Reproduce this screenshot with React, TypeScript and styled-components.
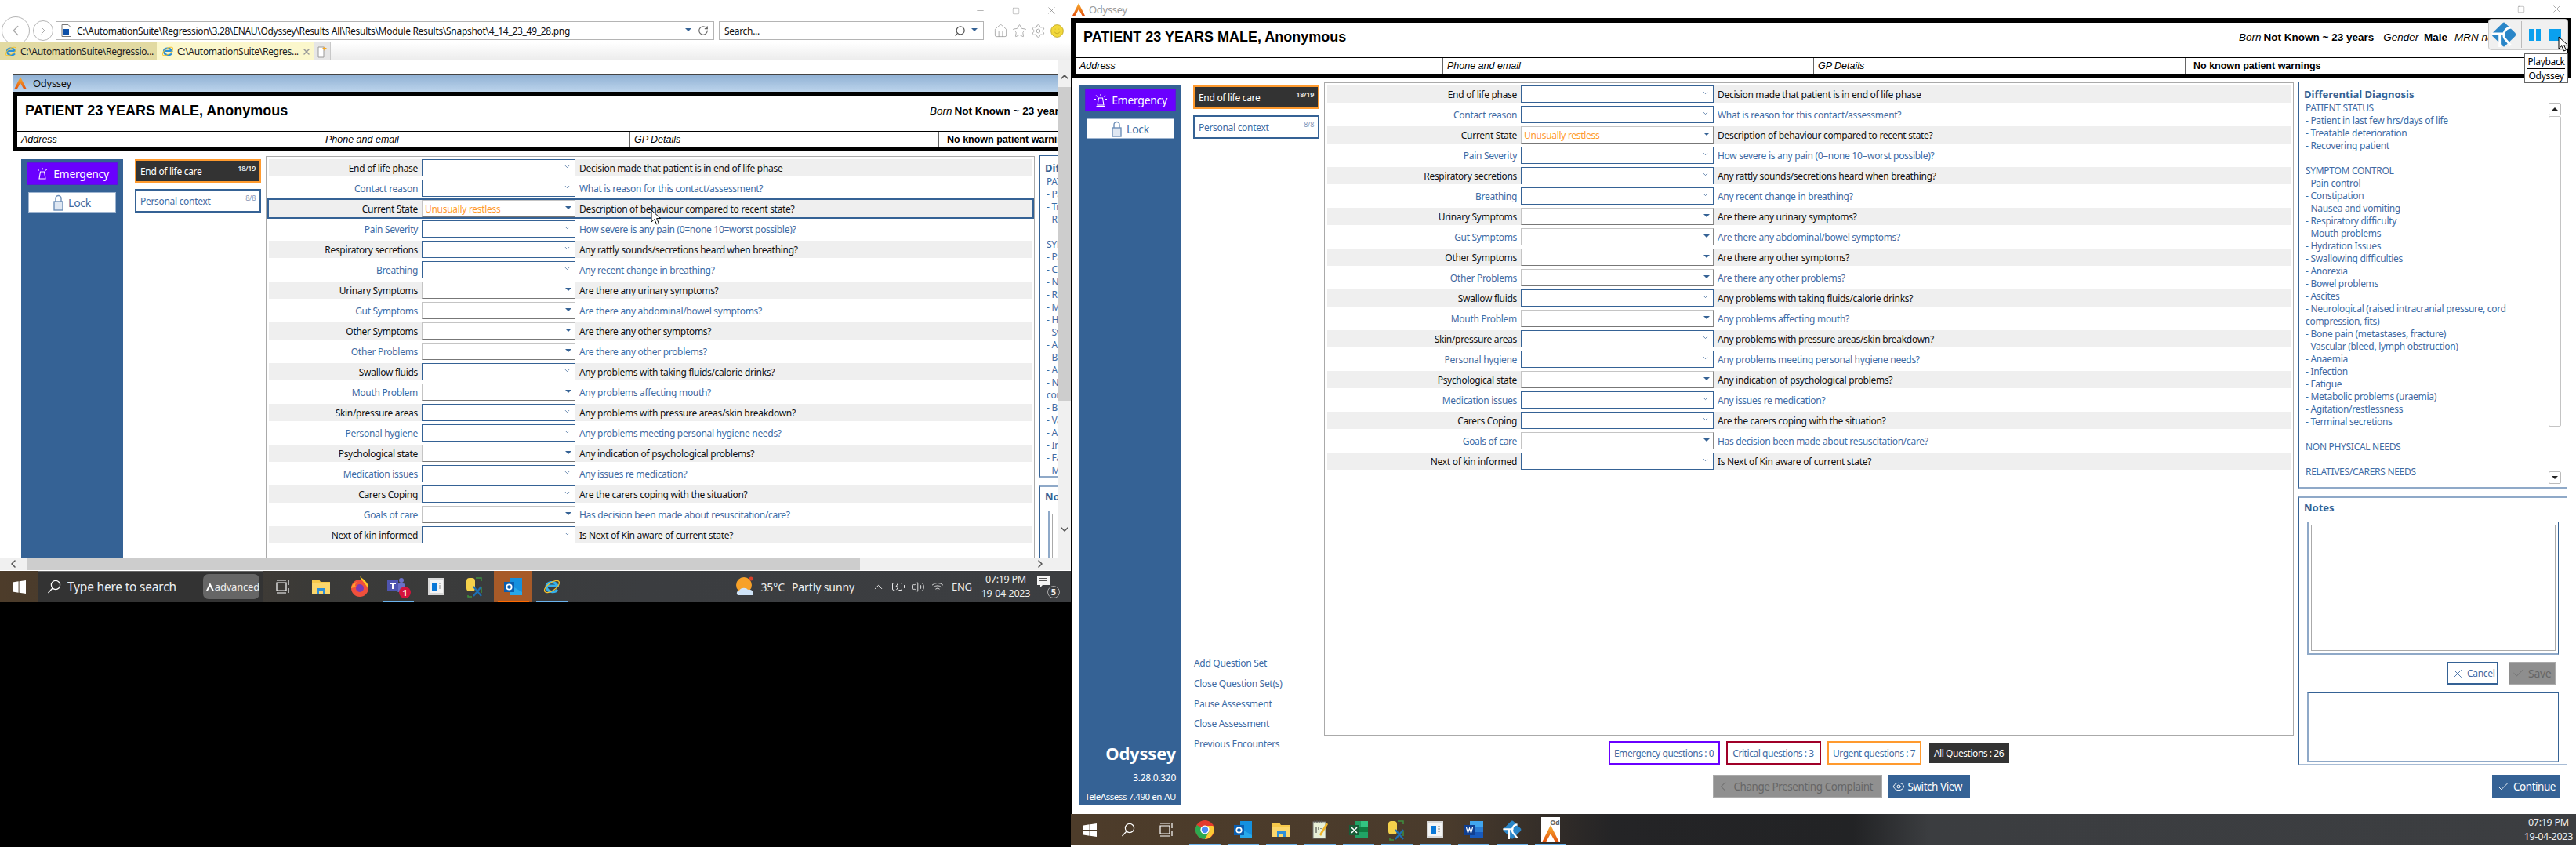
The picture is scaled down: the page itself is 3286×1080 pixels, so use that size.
import React from "react";
import styled, { createGlobalStyle } from "styled-components";
import { X, Check, ChevronLeft, ChevronRight, ChevronUp, ChevronDown, Eye, Home, Star, Settings, Search, RotateCw, Smile, Minus, Square, Volume2, Wifi, BatteryCharging } from "lucide-react";

const BLUE = "#356295";
const TXT = "#3f6ba3";
const UI = `"Noto Sans", "Open Sans", sans-serif`;
const ARIAL = `"Liberation Sans", Arial, sans-serif`;

const Global = createGlobalStyle`
  html, body { margin: 0; padding: 0; background: #000; }
  * { box-sizing: border-box; }
`;

const Page = styled.div`
  display: flex; align-items: flex-start; width: 3286px; height: 1080px; background: #000; overflow: hidden;
  font-family: ${UI}; font-size: 12px; letter-spacing: -0.3px; color: #000;
`;
const LeftWindow = styled.div`
  position: relative; width: 1366px; height: 768px; background: #fff; display: flex; flex-direction: column; flex: none;
`;
const RightWindow = styled.div`
  position: relative; width: 1920px; height: 1080px; background: #fff; display: flex; flex-direction: column; flex: none;
`;
const Controls = styled.div<{ $h: number }>`
  height: ${p => p.$h}px; display: flex; align-items: center; justify-content: flex-end; padding-right: 2px; flex: 1;
`;
const CtlSlot = styled.div`
  width: 45.5px; display: flex; align-items: center; justify-content: center; color: #777;
`;
const TopRow = styled.div`display: flex; flex: none; align-items: center;`;
const NavRow = styled.div`
  height: 24px; flex: none; display: flex; align-items: center; margin-bottom: 3px;
`;
const RoundBtn = styled.div<{ $s: number; $ml: number }>`
  width: ${p => p.$s}px; height: ${p => p.$s}px; margin-left: ${p => p.$ml}px; border-radius: 50%; border: 1px solid #b5b5b5;
  display: flex; align-items: center; justify-content: center; color: #aaa; flex: none; background: #fff;
`;
const UrlBox = styled.div<{ $w: number; $ml: number }>`
  width: ${p => p.$w}px; margin-left: ${p => p.$ml}px; height: 24px; border: 1px solid #b4b4b4; display: flex; align-items: center;
  padding: 0 6px 0 6px; gap: 7px; white-space: nowrap; font-size: 12px; flex: none; color: #111; overflow: hidden;
`;
const UrlText = styled.span`flex: 1; overflow: hidden;`;
const Tools = styled.div`display: flex; gap: 5px; margin-left: 12px; color: #999;`;
const TabRow = styled.div`
  height: 23px; flex: none; display: flex; background: linear-gradient(#fff, #ececec);
`;
const BrowserTab = styled.div<{ $active?: boolean }>`
  width: 200px; display: flex; align-items: center; gap: 4px; padding-left: 6px; white-space: nowrap; font-size: 12px; color: #222;
  background: ${p => (p.$active ? "#fbf7cc" : "#e2daa2")}; overflow: hidden;
`;
const NewTab = styled.div`
  width: 22px; background: #e6e6e6; border: 1px solid #c8c8c8; border-width: 0 1px; display: flex; align-items: center; justify-content: center;
`;
const Middle = styled.div`height: 634px; flex: none; display: flex;`;
const ContentPane = styled.div`flex: 1; overflow: hidden; padding: 17px 0 0 16px; min-width: 0;`;
const VScroll = styled.div`
  width: 16px; flex: none; background: #f0f0f0; display: flex; flex-direction: column; align-items: center; color: #555;
`;
const VEnd = styled.div<{ $h: number }>`height: ${p => p.$h}px; flex: none; display: flex; align-items: flex-end; justify-content: center;`;
const VThumb = styled.div`height: 400px; width: 16px; background: #cdcdcd; flex: none;`;
const HScroll = styled.div`height: 16px; flex: none; background: #f0f0f0; display: flex; align-items: center; color: #555;`;
const HBtn = styled.div`width: 34px; display: flex; justify-content: center; flex: none;`;
const HThumb = styled.div`width: 1063px; height: 16px; background: #cdcdcd; flex: none;`;
const HRight = styled.div`margin-left: 222px; flex: none; display: flex;`;
const Hairline = styled.div`height: 1px; flex: none; background: #fff;`;

const TitleBar = styled.div`
  height: 23px; display: flex; align-items: center; gap: 8px; padding-left: 2px;
  background: linear-gradient(#8fb0d3, #bcd4ec); font-size: 13px; color: #111; border-top: 1px solid #444;
`;
const PlainTitle = styled.div`
  display: flex; align-items: center; gap: 5px; padding-left: 2px; height: 23px; width: 300px; flex: none; color: #9a9a9a; font-size: 13px;
`;
const HeaderFrame = styled.div<{ $w: number }>`
  width: ${p => p.$w}px; border: solid #000; border-width: 6px 6px 5px; background: #fff; font-family: ${ARIAL}; letter-spacing: 0;
`;
const HeaderTop = styled.div`height: 45px; border-bottom: 1px solid #000; display: flex; padding: 6px 10px 0; white-space: nowrap;`;
const PatientTitle = styled.div`font-size: 18px; font-weight: 700; line-height: 24px; width: 335px; flex: none;`;
const Born = styled.div<{ $gap: number }>`margin-left: ${p => p.$gap}px; font-size: 13.5px; line-height: 26px; font-weight: 700; display: flex; gap: 3px;`;
const Em = styled.span<{ $ml?: number }>`font-style: italic; font-weight: 400; margin-left: ${p => p.$ml ?? 0}px;`;
const HeaderCols = styled.div<{ $cols: string }>`display: grid; grid-template-columns: ${p => p.$cols}; height: 20px;`;
const HeaderCell = styled.div<{ $strong?: boolean }>`
  font-size: 12.5px; line-height: 21px; padding-left: ${p => (p.$strong ? 10 : 5)}px; white-space: nowrap; overflow: hidden;
  font-style: ${p => (p.$strong ? "normal" : "italic")}; font-weight: ${p => (p.$strong ? 700 : 400)}; border-left: 1px solid #666;
  &:first-child { border-left: 0; }
`;
const Body = styled.div`
  height: 939px; border-left: 1px solid #000; padding: 5px 0 0 10px; display: flex; align-items: flex-start; background: #fff; width: 1900px;
`;
const Sidebar = styled.aside`
  width: 130px; height: 918px; margin-top: 5px; background: ${BLUE}; padding: 4px 7px 3px 7px; display: flex; flex-direction: column; flex: none; color: #fff;
`;
const EmergencyBtn = styled.div`
  height: 29px; background: #6a00ff; border: 1px solid #5a16d8; color: #fff; display: flex; align-items: center; justify-content: center; gap: 5px; font-size: 14px;
`;
const LockBtn = styled.div`
  height: 26px; width: 112px; margin: 9px auto 0; background: #fff; border: 1px solid #9db4d0; color: ${TXT}; display: flex; align-items: center; justify-content: center; gap: 6px; font-size: 14px;
`;
const SideFoot = styled.div`margin-top: auto; display: flex; flex-direction: column; align-items: flex-end; white-space: nowrap;`;
const Brand = styled.div`font-size: 22px; font-weight: 700; line-height: 30px; letter-spacing: -0.2px;`;
const Version = styled.div`font-size: 12px; line-height: 16px; margin-top: 9px;`;
const Tele = styled.div`font-size: 11.5px; letter-spacing: -0.45px; line-height: 16px; margin-top: 8px;`;
const Nav = styled.nav`width: 161px; margin: 5px 0 0 15px; height: 918px; display: flex; flex-direction: column; flex: none;`;
const SetTab = styled.div<{ $active?: boolean }>`
  height: 30px; margin-bottom: 8px; border: 2px solid ${p => (p.$active ? "#ff9a2e" : BLUE)}; background: ${p => (p.$active ? "#333" : "#fff")};
  color: ${p => (p.$active ? "#fff" : TXT)}; padding: 0 5px; display: flex; justify-content: space-between; font-size: 12px; line-height: 27px;
`;
const SetCount = styled.span<{ $active?: boolean }>`font-size: 9px; line-height: 20px; font-weight: ${p => (p.$active ? 600 : 400)}; color: ${p => (p.$active ? "#eee" : "#7f95b5")};`;
const Links = styled.div`margin-top: auto; display: flex; flex-direction: column; margin-bottom: 65px;`;
const NavLink = styled.a`color: ${TXT}; height: 25.8px; line-height: 25.8px; padding-left: 1px; white-space: nowrap;`;
const Center = styled.div<{ $w: number }>`width: ${p => p.$w}px; margin: 1px 0 0 6px; display: flex; flex-direction: column; align-items: stretch; flex: none;`;
const FormPanel = styled.div`height: 833px; border: 1px solid #aaa; padding: 3px 2px 0 3px; display: flex; flex-direction: column; gap: 4px; flex: none;`;
const Row = styled.div<{ $lab: number; $sel: number; $alt: boolean; $focus?: boolean }>`
  display: grid; grid-template-columns: ${p => p.$lab}px ${p => p.$sel}px 1fr; height: 22px; line-height: 23px; flex: none;
  background: ${p => (p.$alt ? "#efefef" : "#fff")}; color: ${p => (p.$alt ? "#111" : TXT)}; white-space: nowrap;
  ${p => (p.$focus ? `outline: 2px solid ${BLUE};` : "")}
`;
const RowLabel = styled.div`text-align: right; padding-right: 5px;`;
const RowText = styled.div`padding-left: 5px;`;
const Select = styled.div<{ $gray: boolean }>`
  height: 22px; background: #fff; display: flex; align-items: center; justify-content: space-between; padding: 0 3px;
  border: 1px solid ${p => (p.$gray ? "#c4c4c4" : BLUE)}; ${p => (p.$gray ? "border-bottom-color:#777;border-right-color:#888;" : "")}
  color: #ff9a2e; font-size: 12px;
`;
const Tri = styled.span<{ $dir?: string }>`
  width: 0; height: 0; border-left: 4px solid transparent; border-right: 4px solid transparent; margin: 0 1px 2px auto;
  ${p => (p.$dir === "up" ? "border-bottom: 4px solid #222;margin:0;" : `border-top: 4px solid ${p.$dir === "dn" ? "#222" : BLUE};`)}
  ${p => (p.$dir === "dn" ? "margin:0;" : "")}
`;
const Chev = styled.span`margin-left: auto; color: ${BLUE}; display: flex; margin-top: -3px; margin-right: 2px;`;
const Chips = styled.div`margin-top: 7px; height: 30px; display: flex; justify-content: center; align-items: center; gap: 8px; flex: none; padding-right: 1px;`;
const Chip = styled.div<{ $c: string; $w: number }>`
  width: ${p => p.$w}px; height: 30px; border: 2px solid ${p => p.$c}; display: flex; align-items: center; justify-content: center; color: ${TXT};
  font-size: 12px; letter-spacing: -0.45px; white-space: nowrap;
`;
const AllChip = styled.div`width: 102px; height: 26px; background: #333; color: #fff; display: flex; align-items: center; justify-content: center; letter-spacing: -0.45px; white-space: nowrap; margin-left: 2px;`;
const Actions = styled.div`margin-top: 13px; display: flex; justify-content: center; gap: 8px; padding-left: 82px; flex: none;`;
const GrayBtn = styled.div`
  width: 216px; height: 29px; background: #909090; color: #666; display: flex; align-items: center; gap: 4px; padding: 0 2px; font-size: 13.5px; letter-spacing: -0.45px; white-space: nowrap; border: 1px solid #aaa;
`;
const BlueBtn = styled.div`
  height: 29px; background: ${BLUE}; color: #fff; display: flex; align-items: center; gap: 4px; padding: 0 5px; font-size: 13.5px; letter-spacing: -0.45px; white-space: nowrap;
`;
const SwitchBtn = styled(BlueBtn)`width: 104px;`;
const RightCol = styled.div<{ $ml: number }>`margin-left: ${p => p.$ml}px; width: 343px; display: flex; flex-direction: column; flex: none;`;
const DiffPanel = styled.section<{ $h: number }>`
  height: ${p => p.$h}px; border: 1px solid ${BLUE}; border-bottom: 2px solid #8fa9c8; padding: 5px 0 0 6px; overflow: hidden; color: ${TXT}; flex: none;
`;
const PanelTitle = styled.div`font-size: 13px; font-weight: 700; color: ${BLUE}; line-height: 20px; letter-spacing: 0;`;
const DiffBody = styled.div`display: flex;`;
const DiffText = styled.div`flex: 1; padding-left: 2px; line-height: 16px; min-width: 0;`;
const DiffLine = styled.div`height: 16px; white-space: pre;`;
const DiffScroll = styled.div`width: 16px; flex: none; margin: 1px 7px 0 0; height: 486px; display: flex; flex-direction: column; align-items: stretch;`;
const ScrollBtn = styled.div`height: 16px; border: 1px solid #bbb; border-radius: 2px; display: flex; align-items: center; justify-content: center; flex: none; background: #fff;`;
const ScrollTrack = styled.div`height: 396px; margin: 1px 0 auto; border: 1px solid #c4c4c4; border-radius: 2px; flex: none;`;
const NotesPanel = styled.section`
  margin-top: 10px; height: 343px; border: 1px solid ${BLUE}; border-top: 2px solid #8fa9c8; border-bottom: 2px solid #a8bcd5; padding: 2px 10px 0 10px; flex: none;
`;
const NotesHead = styled(PanelTitle)`margin: 0 0 8px -4px;`;
const NotesArea = styled.div`height: 170px; border: 1px solid ${BLUE}; border-left: 2px solid #8fa9c8; border-bottom: 2px solid #8fa9c8; padding: 3px;`;
const NotesInner = styled.div`height: 100%; border: 1px solid #aaa;`;
const NotesBtns = styled.div`margin-top: 9px; display: flex; justify-content: flex-end; gap: 13px; padding-right: 4px; height: 29px;`;
const CancelBtn = styled.div`width: 66px; border: 2px solid ${BLUE}; background: #fff; color: ${TXT}; display: flex; align-items: center; gap: 3px; padding-left: 3px; font-size: 12px;`;
const SaveBtn = styled.div`width: 60px; background: #8e8e8e; color: #666; border: 1px solid #aaa; display: flex; align-items: center; gap: 4px; padding-left: 3px; font-size: 14px;`;
const NotesBox = styled.div`margin-top: 9px; height: 90px; border: 1px solid ${BLUE}; border-left: 2px solid #8fa9c8; border-bottom: 2px solid #8fa9c8;`;
const ContinueBtn = styled(BlueBtn)`margin: 12px 10px 0 auto; width: 86px; padding: 0 4px; justify-content: center;`;
const Taskbar = styled.footer<{ $bg: string }>`
  height: 40px; flex: none; display: flex; align-items: center; background: ${p => p.$bg}; color: #eee; overflow: hidden;
`;
const Slot = styled.div<{ $on?: boolean; $hot?: boolean; $w?: number }>`
  width: ${p => p.$w ?? 49}px; height: 40px; flex: none; display: flex; align-items: center; justify-content: center; position: relative;
  background: ${p => (p.$hot ? "#a75a28" : "transparent")};
  &::after { content: ""; position: absolute; bottom: 0; left: 4.5px; right: 4.5px; height: 2px;
    background: ${p => (p.$hot ? "#ff6a00" : p.$on ? "#6cb4ee" : "transparent")}; }
`;
const RedBadge = styled.span`
  position: absolute; right: 8px; bottom: 5px; width: 15px; height: 15px; border-radius: 50%; background: #d3143c; color: #fff; font-size: 11px; line-height: 15px; text-align: center; font-weight: 700; letter-spacing: 0;
`;
const OdTile = styled.div`
  width: 24px; height: 32px; background: #fff; position: relative; display: flex; align-items: flex-end; justify-content: center;
`;
const OdMark = styled.span`position: absolute; top: 1px; right: 0; font-size: 9px; line-height: 11px; font-weight: 700; color: #666;`;
const SearchBox = styled.div`
  width: 288px; height: 40px; background: #333; border: 1px solid #666; display: flex; align-items: center; padding: 0 4px 0 11px; flex: none; gap: 8px; font-size: 15.5px; letter-spacing: -0.2px;
`;
const SearchText = styled.span`flex: 1; white-space: nowrap;`;
const Pill = styled.div`width: 72px; height: 32px; background: #666; border-radius: 7px; display: flex; align-items: center; gap: 1px; padding-left: 4px; font-size: 13px;`;
const Spacer = styled.div`flex: 1;`;
const Tray = styled.div`display: flex; align-items: center; height: 40px; white-space: nowrap; flex: none;`;
const Weather = styled.div`display: flex; align-items: center; gap: 7px; font-size: 14px; letter-spacing: -0.1px; margin-right: 22px;`;
const WeatherText = styled.span`margin-right: 2px;`;
const TrayIcons = styled.div`display: flex; align-items: center; gap: 8px; color: #eee;`;
const Lang = styled.div`margin: 0 12px 0 10px; font-size: 13px;`;
const Clock = styled.div<{ $mr: number }>`font-size: 12.5px; line-height: 18px; text-align: center; margin-right: ${p => p.$mr}px; color: #eee;`;
const Notify = styled.div`width: 30px; height: 30px; position: relative; margin-right: 14px; margin-left: 8px;`;
const NotifyBadge = styled.span`
  position: absolute; right: 0; bottom: 0; width: 16px; height: 16px; border-radius: 50%; border: 1px solid #aaa; background: #3b3d40; font-size: 11px; line-height: 14px; text-align: center; font-weight: 700; letter-spacing: 0;
`;
const Cursor = styled.svg<{ $x: number; $y: number }>`position: absolute; left: ${p => p.$x}px; top: ${p => p.$y}px; z-index: 5;`;
const Recorder = styled.div`
  position: absolute; left: 1808px; top: 24px; width: 102px; height: 40px; background: #f0f0f0; border: 1px solid #ccc; border-radius: 4px; z-index: 3;
  display: flex; align-items: center; padding-left: 3px;
`;
const RecDivider = styled.div`width: 1px; height: 34px; background: #bbb; margin: 0 9px 0 6px;`;
const RecBtns = styled.div`display: flex; gap: 10px;`;
const PauseBar = styled.div`width: 15px; height: 15px; border-left: 6px solid #0aa0ee; border-right: 6px solid #0aa0ee;`;
const StopBox = styled.div`width: 16px; height: 15px; background: #0aa0ee;`;
const Tip = styled.div`
  position: absolute; left: 1854px; top: 68px; width: 56px; height: 38px; background: #fff; border: 1px solid #666; z-index: 4; text-align: center; font-size: 12px; line-height: 15px; padding: 2px 3px 0;
`;
const TipTop = styled.div`border-bottom: 1px solid #000; padding-bottom: 1px; margin-bottom: 1px;`;

const rows: [string, string, boolean][] = [
  ["End of life phase", "Decision made that patient is in end of life phase", false],
  ["Contact reason", "What is reason for this contact/assessment?", false],
  ["Current State", "Description of behaviour compared to recent state?", true],
  ["Pain Severity", "How severe is any pain (0=none 10=worst possible)?", false],
  ["Respiratory secretions", "Any rattly sounds/secretions heard when breathing?", false],
  ["Breathing", "Any recent change in breathing?", false],
  ["Urinary Symptoms", "Are there any urinary symptoms?", true],
  ["Gut Symptoms", "Are there any abdominal/bowel symptoms?", true],
  ["Other Symptoms", "Are there any other symptoms?", true],
  ["Other Problems", "Are there any other problems?", true],
  ["Swallow fluids", "Any problems with taking fluids/calorie drinks?", false],
  ["Mouth Problem", "Any problems affecting mouth?", true],
  ["Skin/pressure areas", "Any problems with pressure areas/skin breakdown?", false],
  ["Personal hygiene", "Any problems meeting personal hygiene needs?", false],
  ["Psychological state", "Any indication of psychological problems?", true],
  ["Medication issues", "Any issues re medication?", false],
  ["Carers Coping", "Are the carers coping with the situation?", false],
  ["Goals of care", "Has decision been made about resuscitation/care?", true],
  ["Next of kin informed", "Is Next of Kin aware of current state?", false],
];
const diffLines = [
  "PATIENT STATUS", "- Patient in last few hrs/days of life", "- Treatable deterioration", "- Recovering patient", " ",
  "SYMPTOM CONTROL", "- Pain control", "- Constipation", "- Nausea and vomiting", "- Respiratory difficulty", "- Mouth problems",
  "- Hydration Issues", "- Swallowing difficulties", "- Anorexia", "- Bowel problems", "- Ascites",
  "- Neurological (raised intracranial pressure, cord", "compression, fits)", "- Bone pain (metastases, fracture)", "- Vascular (bleed, lymph obstruction)",
  "- Anaemia", "- Infection", "- Fatigue", "- Metabolic problems (uraemia)", "- Agitation/restlessness", "- Terminal secretions", " ",
  "NON PHYSICAL NEEDS", " ", "RELATIVES/CARERS NEEDS",
];

const OdysseyLogo = ({ s = 16 }: { s?: number }) => (
  <svg width={s} height={s} viewBox="0 0 16 16">
    <defs><linearGradient id="ody" x1="0" y1="0" x2="0" y2="1"><stop offset="0" stopColor="#f9b233" /><stop offset="1" stopColor="#e2500c" /></linearGradient></defs>
    <path d="M8 0 16 16H12.5L8 8 3.5 16H0Z" fill="url(#ody)" />
  </svg>
);
const OdysseyLogoWhite = () => (
  <svg width="14" height="16" viewBox="0 0 16 16"><path d="M8 0 16 16H12.5L8 8 3.5 16H0Z" fill="#fff" /></svg>
);
const WinLogo = () => (
  <svg width="17" height="17" viewBox="0 0 17 17" fill="#fff"><path d="M0 2.4 7.6 1.3V8H0ZM8.6 1.2 17 0V8H8.6ZM0 9H7.6V15.7L0 14.6ZM8.6 9H17V17L8.6 15.8Z" /></svg>
);
const TaskView = () => (
  <svg width="18" height="18" viewBox="0 0 18 18" fill="none" stroke="#fff" strokeWidth="1.2"><path d="M1 1H13M1 17H13M1 4H13V14H1ZM16 1V7M16 11V17" /></svg>
);
const Magnifier = () => (
  <svg width="18" height="18" viewBox="0 0 18 18" fill="none" stroke="#fff" strokeWidth="1.2"><circle cx="11" cy="7" r="5.6" /><path d="M7 11 1.5 17" /></svg>
);
const Folder = () => (
  <svg width="23" height="22" viewBox="0 0 23 22"><path d="M0 2H9L11 5H23V20H0Z" fill="#f7c94b" /><path d="M0 7H23V20H0Z" fill="#fbd76c" /><path d="M6 13H17V20H14V16H9V20H6Z" fill="#2f8fd8" /></svg>
);
const Firefox = () => (
  <svg width="24" height="26" viewBox="0 0 24 26"><circle cx="12" cy="15" r="11" fill="#f0503c" /><path d="M12 0C19 5 24 10 23 17 20 9 15 7 12 0Z" fill="#ffc526" /><path d="M1 15C2 10 5 8 8 7 5 11 6 13 8 13Z" fill="#ff9a2e" /><circle cx="12" cy="15" r="5" fill="#7b3bb5" /></svg>
);
const Teams = () => (
  <svg width="27" height="26" viewBox="0 0 27 26"><circle cx="18" cy="5" r="3" fill="#6b70c7" /><rect x="12" y="9" width="11" height="11" rx="3" fill="#6b70c7" /><rect x="0" y="5" width="14" height="14" fill="#4f55b0" /><path d="M3 8H11V10H8V16H6V10H3Z" fill="#fff" /></svg>
);
const Remote = () => (
  <svg width="21" height="22" viewBox="0 0 21 22"><rect width="21" height="22" fill="#d8d8d8" /><rect x="2" y="3" width="17" height="16" fill="#f4f4f4" /><rect x="5" y="6" width="7" height="10" fill="#0a78d7" /><path d="M14 7H17M14 10H17M14 13H17" stroke="#888" /></svg>
);
const SqlTool = () => (
  <svg width="23" height="27" viewBox="0 0 23 27"><rect x="1" y="2" width="11" height="17" rx="4" fill="#f5d24b" /><path d="M13 2H20V6M3 24V26H8M20 14V21" stroke="#3f8f3f" strokeWidth="1.5" fill="none" /><path d="M10 13 20 25M20 13 10 25" stroke="#1c6fb5" strokeWidth="2.2" /></svg>
);
const Outlook = () => (
  <svg width="24" height="24" viewBox="0 0 24 24"><rect x="8" y="1" width="15" height="21" fill="#1490df" /><path d="M8 10 23 19V23H8Z" fill="#28a8ea" /><rect x="0" y="6" width="13" height="13" fill="#0a5eb0" /><circle cx="6.5" cy="12.5" r="3.2" fill="none" stroke="#fff" strokeWidth="1.8" /></svg>
);
const IEIcon = () => (
  <svg width="22" height="24" viewBox="0 0 22 24" fill="none"><path d="M18 16C15 20 5 20 4 12 4 6 15 4 18 11H5" stroke="#35b0ea" strokeWidth="3.2" /><ellipse cx="11" cy="12" rx="11" ry="5" transform="rotate(-35 11 12)" stroke="#f5c32c" strokeWidth="1.2" /></svg>
);
const MiniIE = () => (
  <svg width="16" height="17" viewBox="0 0 22 24" fill="none"><path d="M18 16C15 20 5 20 4 12 4 6 15 4 18 11H5" stroke="#2a8fd8" strokeWidth="3.2" /><ellipse cx="11" cy="12" rx="11" ry="5" transform="rotate(-35 11 12)" stroke="#f5c32c" strokeWidth="1.4" /></svg>
);
const PageIcon = () => (
  <svg width="13" height="16" viewBox="0 0 13 16"><path d="M1 .5H9L12.5 4V15.5H1Z" fill="#fff" stroke="#777" /><rect x="3" y="6" width="7" height="7" fill="#0b4fa8" /></svg>
);
const Chrome = () => (
  <svg width="24" height="24" viewBox="0 0 24 24"><circle cx="12" cy="12" r="12" fill="#e33b2e" /><path d="M12 12 1.6 6A12 12 0 0 0 12 24L18 14Z" fill="#2da94f" /><path d="M12 7H22.4A12 12 0 0 1 12 24L18 13Z" fill="#fcc934" /><circle cx="12" cy="12" r="5.6" fill="#fff" /><circle cx="12" cy="12" r="4.2" fill="#4a8af4" /></svg>
);
const Notepad = () => (
  <svg width="20" height="24" viewBox="0 0 20 24"><rect x="1" y="2" width="16" height="21" fill="#e8f0d8" stroke="#777" /><path d="M3 0V4M6 0V4M9 0V4M12 0V4" stroke="#555" /><path d="M5 9V16M8 9V12M11 10V11" stroke="#333" /><path d="M9 18 18 3 20 5 11 20Z" fill="#f0b428" /></svg>
);
const Excel = () => (
  <svg width="24" height="24" viewBox="0 0 24 24"><rect x="7" y="1" width="17" height="22" fill="#21a366" /><rect x="15" y="1" width="9" height="7" fill="#33c481" /><rect x="7" y="8" width="17" height="7" fill="#107c41" /><rect x="0" y="6" width="13" height="13" fill="#185c37" /><path d="M3 9 10 16M10 9 3 16" stroke="#fff" strokeWidth="1.6" /></svg>
);
const Word = () => (
  <svg width="24" height="24" viewBox="0 0 24 24"><rect x="7" y="1" width="17" height="7" fill="#41a5ee" /><rect x="7" y="8" width="17" height="7" fill="#2b7cd3" /><rect x="7" y="15" width="17" height="8" fill="#185abd" /><rect x="0" y="6" width="13" height="13" fill="#103f91" /><path d="M2.5 9 4.5 16 6.5 10 8.5 16 10.5 9" stroke="#fff" strokeWidth="1.2" fill="none" /></svg>
);
const TcLogo = ({ s = 32 }: { s?: number }) => (
  <svg width={s} height={s} viewBox="0 0 32 33">
    <path d="M14.5 1.2Q16 0 17.5 1.2L31 14.5Q32.5 16.5 31 18.5L17.5 31.8Q16 33 14.5 31.8L1 18.5Q-.5 16.5 1 14.5Z" fill="#2a86c8" />
    <path d="M0 15.5H18M10.5 15.5V33" stroke="#fff" strokeWidth="3" fill="none" />
    <path d="M25 7.5A9.5 9.5 0 0 0 17 21.5L25 31" stroke="#fff" strokeWidth="3" fill="none" />
  </svg>
);
const SirenIcon = () => (
  <svg width="18" height="18" viewBox="0 0 18 18" fill="none" stroke="#fff" strokeWidth="1.1">
    <path d="M6.5 6H11.5L13 15H5ZM3.5 16.5H14.5M9 1V3.5M3 2.5 4.8 4.5M15 2.5 13.2 4.5M1 7.5H3M15 7.5H17" />
  </svg>
);
const TallLock = () => (
  <svg width="13" height="21" viewBox="0 0 13 21" fill="none" stroke="#6e8fb8" strokeWidth="1.4">
    <path d="M3 9V5A3.5 3.5 0 0 1 10 5V9" /><rect x="1" y="9" width="11" height="11" fill="#dfe7f2" />
  </svg>
);
const Weathericon = () => (
  <svg width="24" height="26" viewBox="0 0 24 26"><circle cx="10" cy="11" r="10" fill="#f7a128" /><circle cx="19" cy="3" r="2.5" fill="#d9402a" /><path d="M3 24C0 24 0 18 4 18 6 14 13 14 15 17 20 16 23 20 21 24Z" fill="#cfe3f7" /></svg>
);
const MsgIcon = () => (
  <svg width="18" height="18" viewBox="0 0 18 18"><path d="M1 1H17V13H8L5 16V13H1Z" fill="#f4f4f4" /><path d="M4 4.5H14M4 7.5H14M4 10.5H11" stroke="#555" /></svg>
);
const Arrow = ({ x, y }: { x: number; y: number }) => (
  <Cursor $x={x} $y={y} width="14" height="20" viewBox="0 0 14 20"><path d="M1 1V16L4.8 12.6 7.6 19 10.4 17.8 7.6 11.6H12.6Z" fill="#fff" stroke="#000" strokeWidth="1" /></Cursor>
);
const WinCtl = ({ h }: { h: number }) => (
  <Controls $h={h}>
    <CtlSlot><Minus size={13} strokeWidth={1} /></CtlSlot>
    <CtlSlot><Square size={10} strokeWidth={1} /></CtlSlot>
    <CtlSlot><X size={15} strokeWidth={1} /></CtlSlot>
  </Controls>
);

type Cfg = { width: number; cols: string; bornGap: number; lab: number; sel: number; form: number; gap: number; diffH: number; focus: boolean };

const Assessment = ({ cfg }: { cfg: Cfg }) => (
  <>
    <HeaderFrame $w={cfg.width}>
      <HeaderTop>
        <PatientTitle>PATIENT 23 YEARS MALE, Anonymous</PatientTitle>
        <Born $gap={cfg.bornGap}>
          <Em>Born</Em> Not Known ~ 23 years <Em $ml={9}>Gender</Em> &nbsp;Male <Em $ml={6}>MRN number</Em>
        </Born>
      </HeaderTop>
      <HeaderCols $cols={cfg.cols}>
        <HeaderCell>Address</HeaderCell>
        <HeaderCell>Phone and email</HeaderCell>
        <HeaderCell>GP Details</HeaderCell>
        <HeaderCell $strong>No known patient warnings</HeaderCell>
      </HeaderCols>
    </HeaderFrame>
    <Body>
      <Sidebar>
        <EmergencyBtn><SirenIcon />Emergency</EmergencyBtn>
        <LockBtn><TallLock />Lock</LockBtn>
        <SideFoot>
          <Brand>Odyssey</Brand>
          <Version>3.28.0.320</Version>
          <Tele>TeleAssess 7.490 en-AU</Tele>
        </SideFoot>
      </Sidebar>
      <Nav>
        <SetTab $active>End of life care<SetCount $active>18/19</SetCount></SetTab>
        <SetTab>Personal context<SetCount>8/8</SetCount></SetTab>
        <Links>
          <NavLink>Add Question Set</NavLink>
          <NavLink>Close Question Set(s)</NavLink>
          <NavLink>Pause Assessment</NavLink>
          <NavLink>Close Assessment</NavLink>
          <NavLink>Previous Encounters</NavLink>
        </Links>
      </Nav>
      <Center $w={cfg.form}>
        <FormPanel>
          {rows.map(([label, text, gray], i) => (
            <Row key={label} $lab={cfg.lab} $sel={cfg.sel} $alt={i % 2 === 0} $focus={cfg.focus && i === 2}>
              <RowLabel>{label}</RowLabel>
              <Select $gray={gray}>
                {i === 2 && <span>Unusually restless</span>}
                {gray ? <Tri /> : <Chev><ChevronDown size={9} strokeWidth={2} /></Chev>}
              </Select>
              <RowText>{text}</RowText>
            </Row>
          ))}
        </FormPanel>
        <Chips>
          <Chip $c="#6a00ff" $w={142}>Emergency questions : 0</Chip>
          <Chip $c="#a00028" $w={121}>Critical questions : 3</Chip>
          <Chip $c="#ff9a2e" $w={120}>Urgent questions : 7</Chip>
          <AllChip>All Questions : 26</AllChip>
        </Chips>
        <Actions>
          <GrayBtn><ChevronLeft size={20} strokeWidth={1.2} />Change Presenting Complaint</GrayBtn>
          <SwitchBtn><Eye size={16} strokeWidth={1.5} />Switch View</SwitchBtn>
        </Actions>
      </Center>
      <RightCol $ml={cfg.gap}>
        <DiffPanel $h={cfg.diffH}>
          <PanelTitle>Differential Diagnosis</PanelTitle>
          <DiffBody>
            <DiffText>{diffLines.map((l, i) => <DiffLine key={i}>{l}</DiffLine>)}</DiffText>
            <DiffScroll>
              <ScrollBtn><Tri $dir="up" /></ScrollBtn>
              <ScrollTrack />
              <ScrollBtn><Tri $dir="dn" /></ScrollBtn>
            </DiffScroll>
          </DiffBody>
        </DiffPanel>
        <NotesPanel>
          <NotesHead>Notes</NotesHead>
          <NotesArea><NotesInner /></NotesArea>
          <NotesBtns>
            <CancelBtn><X size={18} strokeWidth={1.2} />Cancel</CancelBtn>
            <SaveBtn><Check size={17} strokeWidth={1.1} />Save</SaveBtn>
          </NotesBtns>
          <NotesBox />
        </NotesPanel>
        <ContinueBtn><Check size={18} strokeWidth={1.2} />Continue</ContinueBtn>
      </RightCol>
    </Body>
  </>
);

const leftCfg: Cfg = { width: 1700, cols: "387px 394px 394px 1fr", bornGap: 819, lab: 195, sel: 196, form: 981, gap: 6, diffH: 411, focus: true };
const rightCfg: Cfg = { width: 1914, cols: "468px 473px 474px 1fr", bornGap: 1139, lab: 247, sel: 246, form: 1237, gap: 6, diffH: 519, focus: false };

export default function App() {
  return (
    <Page>
      <Global />
      <LeftWindow>
        <TopRow><WinCtl h={27} /></TopRow>
        <NavRow>
          <RoundBtn $s={36} $ml={2}><ChevronLeft size={22} strokeWidth={1.5} /></RoundBtn>
          <RoundBtn $s={26} $ml={4}><ChevronRight size={16} strokeWidth={1.5} /></RoundBtn>
          <UrlBox $w={840} $ml={3}>
            <PageIcon />
            <UrlText>C:\AutomationSuite\Regression\3.28\ENAU\Odyssey\Results All\Results\Module Results\Snapshot\4_14_23_49_28.png</UrlText>
            <Tri /><RotateCw size={14} color="#666" />
          </UrlBox>
          <UrlBox $w={338} $ml={6}>
            <UrlText>Search...</UrlText>
            <Search size={15} color="#555" style={{ transform: "scaleX(-1)" }} /><Tri />
          </UrlBox>
          <Tools>
            <Home size={19} strokeWidth={1} /><Star size={19} strokeWidth={1} /><Settings size={19} strokeWidth={1} /><Smile size={19} fill="#f2d83b" color="#b9a020" strokeWidth={1} />
          </Tools>
        </NavRow>
        <TabRow>
          <BrowserTab><MiniIE />C:\AutomationSuite\Regressio...</BrowserTab>
          <BrowserTab $active><MiniIE />C:\AutomationSuite\Regres...<X size={12} color="#999" strokeWidth={3} /></BrowserTab>
          <NewTab><svg width="12" height="16" viewBox="0 0 12 16"><path d="M1 2H8V15H1Z" fill="#fff" stroke="#999" /><path d="M9 1 10 3 12 3 10 5 9 7 8 5 6 3 8 3Z" fill="#f5a623" /></svg></NewTab>
        </TabRow>
        <Middle>
          <ContentPane>
            <TitleBar><OdysseyLogo />Odyssey</TitleBar>
            <Assessment cfg={leftCfg} />
          </ContentPane>
          <VScroll>
            <VEnd $h={34}><ChevronUp size={16} strokeWidth={2.4} style={{ marginBottom: 5 }} /></VEnd>
            <VThumb />
            <VEnd $h={186}><ChevronDown size={16} strokeWidth={2.4} style={{ marginBottom: 14 }} /></VEnd>
          </VScroll>
        </Middle>
        <HScroll>
          <HBtn><ChevronLeft size={16} strokeWidth={2.4} /></HBtn>
          <HThumb />
          <HRight><ChevronRight size={16} strokeWidth={2.4} /></HRight>
        </HScroll>
        <Hairline />
        <Taskbar $bg="linear-gradient(90deg,#4d3c2a 0,#3a3a38 30%,#3b3d40 60%,#3c3e41 100%)">
          <Slot $w={48}><WinLogo /></Slot>
          <SearchBox>
            <Magnifier />
            <SearchText>Type here to search</SearchText>
            <Pill><OdysseyLogoWhite />advanced</Pill>
          </SearchBox>
          <Slot><TaskView /></Slot>
          <Slot><Folder /></Slot>
          <Slot><Firefox /></Slot>
          <Slot $on><Teams /><RedBadge>1</RedBadge></Slot>
          <Slot><Remote /></Slot>
          <Slot><SqlTool /></Slot>
          <Slot $hot><Outlook /></Slot>
          <Slot $on><IEIcon /></Slot>
          <Spacer />
          <Tray>
            <Weather><Weathericon /><WeatherText>35°C</WeatherText>Partly sunny</Weather>
            <TrayIcons>
              <ChevronUp size={17} strokeWidth={1.4} /><BatteryCharging size={18} strokeWidth={1.3} /><Volume2 size={17} strokeWidth={1.3} /><Wifi size={16} strokeWidth={1.3} />
            </TrayIcons>
            <Lang>ENG</Lang>
            <Clock $mr={0}>07:19 PM<br />19-04-2023</Clock>
            <Notify><MsgIcon /><NotifyBadge>5</NotifyBadge></Notify>
          </Tray>
        </Taskbar>
        <Arrow x={830} y={267} />
      </LeftWindow>
      <RightWindow>
        <TopRow>
          <PlainTitle><OdysseyLogo />Odyssey</PlainTitle>
          <WinCtl h={23} />
        </TopRow>
        <Assessment cfg={rightCfg} />
        <Taskbar $bg="linear-gradient(90deg,#4d3c2a 0,#4a3b2c 25%,#242426 36%,#222325 52%,#3b3d40 57%,#3c3e41 100%)">
          <Slot $w={48}><WinLogo /></Slot>
          <Slot><Magnifier /></Slot>
          <Slot><TaskView /></Slot>
          <Slot $on><Chrome /></Slot>
          <Slot $on><Outlook /></Slot>
          <Slot $on><Folder /></Slot>
          <Slot $on><Notepad /></Slot>
          <Slot $on><Excel /></Slot>
          <Slot $on><SqlTool /></Slot>
          <Slot $on><Remote /></Slot>
          <Slot $on><Word /></Slot>
          <Slot $on><TcLogo s={24} /></Slot>
          <Slot $on><OdTile><OdysseyLogo s={22} /><OdMark>Od</OdMark></OdTile></Slot>
          <Spacer />
          <Clock $mr={4}>07:19 PM<br />19-04-2023</Clock>
        </Taskbar>
        <Recorder>
          <TcLogo />
          <RecDivider />
          <RecBtns><PauseBar /><StopBox /></RecBtns>
        </Recorder>
        <Tip><TipTop>Playback</TipTop>Odyssey</Tip>
        <Arrow x={1897} y={46} />
      </RightWindow>
    </Page>
  );
}
